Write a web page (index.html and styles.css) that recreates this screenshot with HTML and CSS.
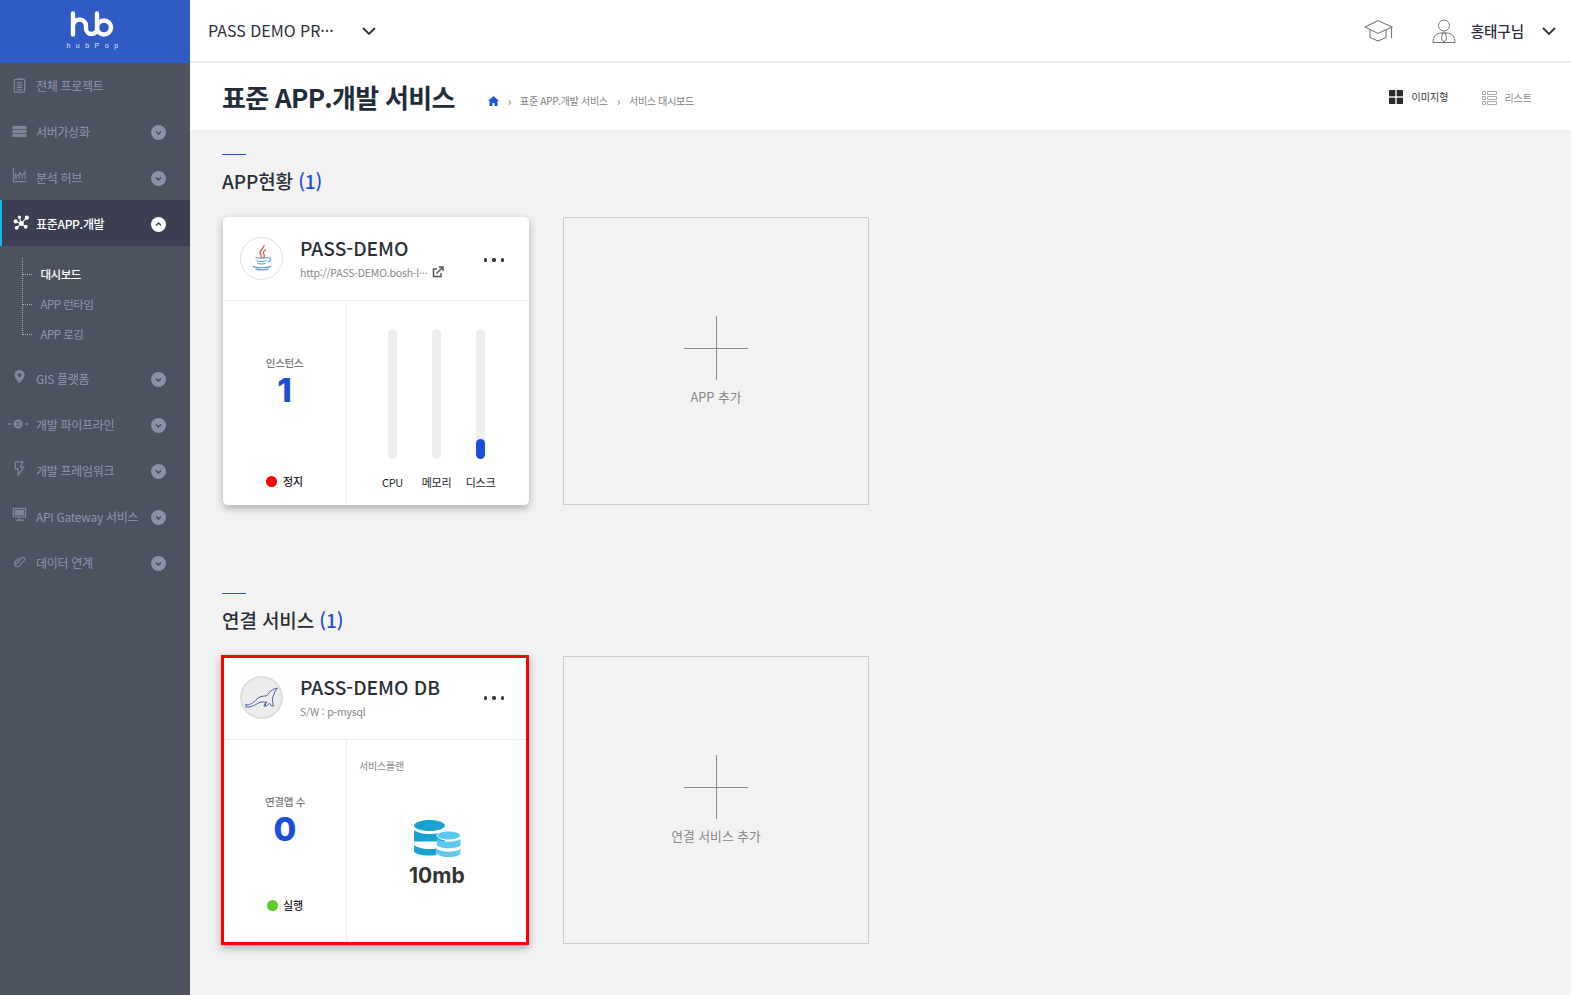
FILE: index.html
```html
<!DOCTYPE html>
<html lang="ko">
<head>
  <meta charset="UTF-8">
  <title>표준 APP.개발 서비스</title>
  <link rel="stylesheet" href="styles.css">
</head>
<body>
  <aside class="sidebar">
    <div class="logo">
      <svg width="44" height="26" viewBox="0 0 44 26" fill="none" stroke="#fff" stroke-width="4.4" stroke-linecap="round"><path d="M3 2.5V23.5M3 15a6.5 6.5 0 0 1 13 0v2.5a5.5 5.5 0 0 0 11 0V2.5"/><circle cx="34" cy="16.5" r="7"/></svg>
      <span class="logo-text">hubPop</span>
    </div>
    <ul class="menu">
      <li class="menu-item first">
        <svg class="menu-icon" viewBox="0 0 16 16" fill="none" stroke="#7f869b" stroke-width="1.3"><rect x="2.5" y="1.5" width="11" height="13.5" rx="1"/><path d="M5 5h6M5 7.5h6M5 10h6M5 12.5h6M6 1h4"/></svg>
        <span>전체 프로젝트</span>
      </li>
      <li class="menu-item">
        <svg class="menu-icon" viewBox="0 0 16 16" fill="#7f869b"><rect x="0.5" y="2" width="15" height="3.4"/><rect x="0.5" y="6.2" width="15" height="3.4"/><rect x="0.5" y="10.4" width="15" height="3.4"/></svg>
        <span>서버가상화</span><i class="toggle"><svg viewBox="0 0 15 15"><path d="M5 6.5l2.5 2.5 2.5-2.5"/></svg></i>
      </li>
      <li class="menu-item">
        <svg class="menu-icon lifted" viewBox="0 0 16 16" fill="none" stroke="#7f869b" stroke-width="1.2"><path d="M1.5 0v14.500h14"/><path d="M3.500 12V6.500l2.500 2 2.500-3.500 2.500 3 3-4V12" /><path d="M5 12V9M8 12V7M11 12V9"/></svg>
        <span>분석 허브</span><i class="toggle"><svg viewBox="0 0 15 15"><path d="M5 6.500l2.500 2.500 2.500-2.500"/></svg></i>
      </li>
      <li class="menu-item active">
        <svg class="menu-icon node" viewBox="0 0 16 16" fill="#fff" stroke="#fff" stroke-width="1"><path d="M2.500 7l5 2 5.500-5.500M7.500 9l-4 4M7.500 9l3.500 2.500M7.500 9L6 3" fill="none"/><circle cx="2.500" cy="7" r="1.500"/><circle cx="8" cy="9" r="1.800"/><circle cx="13" cy="3.500" r="1.500"/><circle cx="3.500" cy="13" r="1.300"/><circle cx="12" cy="12" r="1.300"/><circle cx="6" cy="3" r="1"/></svg>
        <span>표준APP.개발</span><i class="toggle"><svg viewBox="0 0 15 15"><path d="M5 8.500l2.500-2.500 2.500 2.500"/></svg></i>
      </li>
      <li>
        <ul class="submenu">
          <li class="current">대시보드</li>
          <li>APP 런타임</li>
          <li>APP 로깅</li>
        </ul>
      </li>
      <li class="menu-item">
        <svg class="menu-icon lifted" viewBox="0 0 16 16" fill="#7f869b"><path fill-rule="evenodd" d="M8 1a5.500 5.500 0 0 1 5.500 5.500C13.500 10 8 15.500 8 15.500S2.500 10 2.500 6.500A5.500 5.500 0 0 1 8 1zm0 3.500a2 2 0 1 0 0 4 2 2 0 0 0 0-4z"/></svg>
        <span>GIS 플랫폼</span><i class="toggle"><svg viewBox="0 0 15 15"><path d="M5 6.500l2.500 2.500 2.500-2.500"/></svg></i>
      </li>
      <li class="menu-item">
        <svg class="menu-icon wide" viewBox="0 0 22 12" fill="none" stroke="#7f869b"><path d="M0 6h3.500M18 6h3.500" stroke-width="1.500"/><circle cx="10.500" cy="6" r="3.500" fill="#4d5260" stroke-width="2.500"/><circle cx="10.500" cy="6" r="1.500" fill="#7f869b" stroke="none"/></svg>
        <span>개발 파이프라인</span><i class="toggle"><svg viewBox="0 0 15 15"><path d="M5 6.500l2.500 2.500 2.500-2.500"/></svg></i>
      </li>
      <li class="menu-item">
        <svg class="menu-icon lifted" viewBox="0 0 16 16" fill="none" stroke="#7f869b" stroke-width="1.400"><path d="M3.500 1v7.500h3V15l6-8.500H9l1.500-3.500"/><path d="M3.500 1h8l-1 2"/></svg>
        <span>개발 프레임워크</span><i class="toggle"><svg viewBox="0 0 15 15"><path d="M5 6.500l2.500 2.500 2.500-2.500"/></svg></i>
      </li>
      <li class="menu-item">
        <svg class="menu-icon lifted" viewBox="0 0 16 16" fill="none" stroke="#7f869b" stroke-width="1.300"><rect x="1.500" y="1.500" width="13" height="9"/><rect x="3" y="3" width="10" height="6" fill="#7f869b" stroke="none"/><path d="M8 11v2.500M3.500 14h9"/></svg>
        <span>API Gateway 서비스</span><i class="toggle"><svg viewBox="0 0 15 15"><path d="M5 6.500l2.500 2.500 2.500-2.500"/></svg></i>
      </li>
      <li class="menu-item">
        <svg class="menu-icon lifted" viewBox="0 0 16 16" fill="none" stroke="#7f869b" stroke-width="1.200"><path d="M6.500 9.500l4-4.500a2 2 0 0 1 3 2.500l-5.500 6a3 3 0 0 1-4.500-4l4-4.500"/><path d="M9.500 6.500l-4 4.500a1 1 0 0 1-1.500-1.500"/></svg>
        <span>데이터 연계</span><i class="toggle"><svg viewBox="0 0 15 15"><path d="M5 6.500l2.500 2.500 2.500-2.500"/></svg></i>
      </li>
    </ul>
  </aside>

  <div class="content">
    <header class="topbar">
      <div class="project-select">
        <span class="project-name">PASS DEMO PR···</span>
        <svg class="chevron" width="14" height="9" viewBox="0 0 14 9"><path d="M1 1l6 6 6-6"/></svg>
      </div>
      <div class="top-right">
        <svg class="hat" width="30" height="23" viewBox="0 0 30 23" fill="none" stroke="#777" stroke-width="1.100"><path d="M1 8l13-6.500L28 8l-14 6.500z"/><path d="M6 11v7.500l8 3.500 8-3.500V11"/><path d="M27.500 8.500V19"/></svg>
        <svg class="user" width="24" height="24" viewBox="0 0 24 24" fill="none" stroke="#777" stroke-width="1"><circle cx="12" cy="6.500" r="5.500"/><path d="M1 23.500c0-6 3-9 8-9.500h6c5 .5 8 3.500 8 9.500zM10.500 14l-1 6 2.500 3 2.500-3-1-6z"/></svg>
        <span class="user-name">홍태구님</span>
        <svg class="chevron" width="14" height="9" viewBox="0 0 14 9"><path d="M1 1l6 6 6-6"/></svg>
      </div>
    </header>

    <div class="page-head">
      <h1>표준 APP.개발 서비스</h1>
      <nav class="breadcrumb">
        <svg width="11" height="10" viewBox="0 0 11 10" fill="#1a56db"><path d="M5.500 0L11 5H9.500v5H6.500V7h-2v3H1.500V5H0z"/></svg>
        <span class="sep">›</span>
        <span>표준 APP.개발 서비스</span>
        <span class="sep">›</span>
        <span>서비스 대시보드</span>
      </nav>
      <div class="view-switch">
        <span class="view on">
          <svg width="14" height="14" viewBox="0 0 14 14" fill="#2b2b2b"><rect width="6.300" height="6.300"/><rect x="7.700" width="6.300" height="6.300"/><rect y="7.700" width="6.300" height="6.300"/><rect x="7.700" y="7.700" width="6.300" height="6.300"/></svg>
          이미지형
        </span>
        <span class="view off">
          <svg width="15" height="14" viewBox="0 0 15 14" fill="none" stroke="#aaa"><path d="M.5.500h3v3h-3zM.5 5.500h3v3h-3zM.5 10.500h3v3h-3zM5.500.500h9v3h-9zM5.500 5.500h9v3h-9zM5.500 10.500h9v3h-9z"/></svg>
          리스트
        </span>
      </div>
    </div>

    <main class="main">
      <section class="section">
        <h2 class="section-title">APP현황 <em>(1)</em></h2>
        <div class="card-row">
          <article class="card">
            <div class="card-head">
              <div class="avatar">
                <svg width="26" height="28" viewBox="0 0 28 30" fill="none"><path d="M16 1c1 3-4 5-4 8s2 3 1 6M18 6c-3 2-3 3-2 5s1 3-1 4" stroke="#e2574c" stroke-width="1.400"/><path d="M7 14.500c3 1 10 1 13 0M8 18c3 .8 8 .8 11 0M9 21c3 .6 6 .6 9 0M20 15c4-1 5 3 0 4.500" stroke="#5b9bd5" stroke-width="1.100"/><path d="M4 24c5 2 15 2 20 0M7 27c4 1 10 1 14 0" stroke="#5b9bd5" stroke-width="1.300"/></svg>
              </div>
              <div class="card-info">
                <h3>PASS-DEMO</h3>
                <p>http://PASS-DEMO.bosh-l··· <svg class="ext" width="12" height="12" viewBox="0 0 12 12" fill="none" stroke="#555" stroke-width="1.500"><path d="M9 7v3.500H1.500V3H5"/><path d="M4.500 7.500L10.500 1.500M7 1h4v4"/></svg></p>
              </div>
              <span class="more"><b></b><b></b><b></b></span>
            </div>
            <div class="card-body">
              <div class="card-stat">
                <span class="stat-label">인스턴스</span>
                <strong class="stat-num">1</strong>
                <span class="status"><i class="dot red"></i>정지</span>
              </div>
              <div class="usage">
                <div class="usage-col"><div class="track"></div><span>CPU</span></div>
                <div class="usage-col"><div class="track"></div><span>메모리</span></div>
                <div class="usage-col"><div class="track"><div class="fill" style="height: 20px"></div></div><span>디스크</span></div>
              </div>
            </div>
          </article>
          <div class="add-card">
            <span class="plus"></span>
            <span class="add-label">APP 추가</span>
          </div>
        </div>
      </section>

      <section class="section second">
        <h2 class="section-title">연결 서비스 <em>(1)</em></h2>
        <div class="card-row">
          <article class="card selected">
            <div class="card-head">
              <div class="avatar grey">
                <svg width="34" height="23" viewBox="0 0 36 24" fill="none" stroke="#3b5a9a" stroke-width="1"><path d="M1 19c2 2 5 0 8-2s4-5 8-6 6 0 7-2 4-5 7-6l3-1c1 1-1 2-2 3-1 3-3 6-3 10l1 6h-2l-2-3-3 3h-3l2-4c-3 0-5-1-8 1s-9 5-13 4z"/><path d="M21 21l2-5"/></svg>
              </div>
              <div class="card-info">
                <h3>PASS-DEMO DB</h3>
                <p>S/W : p-mysql</p>
              </div>
              <span class="more"><b></b><b></b><b></b></span>
            </div>
            <div class="card-body">
              <div class="card-stat">
                <span class="stat-label">연결앱 수</span>
                <strong class="stat-num">0</strong>
                <span class="status"><i class="dot green"></i>실행</span>
              </div>
              <div class="plan">
                <span class="plan-label">서비스플랜</span>
                <svg class="plan-icon" width="47" height="37" viewBox="0 0 47 37"><path fill="#1ba1d0" d="M0 5.500C0 2.500 7 0 15.500 0S31 2.500 31 5.500 24 11 15.500 11 0 8.500 0 5.500z"/><path fill="#1ba1d0" d="M0 10c3 2.500 9 4 15.500 4S28 12.500 31 10v11.500H0zM0 25c3 2.500 9 4 15.500 4 3 0 5-.2 7-.6V35c-2 .4-4 .5-7 .5C7 35.500 0 33.500 0 31z"/><path fill="#5bc8ee" stroke="#fff" stroke-width="1" d="M23 15.500c0-2.500 5-4.500 11.500-4.500S46.500 13 46.500 15.500 41 20 34.500 20 23 18 23 15.500z"/><path fill="#5bc8ee" d="M23 19c2.500 1.800 6.500 2.800 11.500 2.800S43.500 20.800 46.500 19v6.500c-2.500 1.800-6.500 2.800-12 2.800S25.500 27.300 23 25.500zM23 29c2.500 1.800 6.500 2.800 11.500 2.800S43.500 30.800 46.500 29v3.500c0 2.500-5 4.500-12 4.500S23 35 23 32.500z"/></svg>
                <strong class="plan-size">10mb</strong>
              </div>
            </div>
          </article>
          <div class="add-card">
            <span class="plus"></span>
            <span class="add-label">연결 서비스 추가</span>
          </div>
        </div>
      </section>
    </main>
  </div>
</body>
</html>
```

FILE: styles.css
```css
* {
  box-sizing: border-box;
}

html, body {
  height: 100%;
}

body {
  margin: 0;
  display: flex;
  overflow: hidden;
  background-color: #f2f2f2;
  color: #2b3038;
  font-family: "Noto Sans CJK KR", "Noto Sans", sans-serif;
}

ul {
  list-style: none;
  margin: 0;
  padding: 0;
}

/* sidebar */
.sidebar {
  width: 190px;
  flex-shrink: 0;
  background-color: #4d5260;
}

.logo {
  height: 63px;
  padding: 11px 6px 0 0;
  background-color: #305bc4;
  display: flex;
  flex-direction: column;
  align-items: center;
}

.logo-text {
  margin-top: 4px;
  padding-left: 6px;
  color: #dfe6f8;
  font-family: "Liberation Sans", sans-serif;
  font-size: 7px;
  line-height: 9px;
  letter-spacing: 5.5px;
}

.menu-item {
  height: 46px;
  padding-left: 12px;
  display: flex;
  align-items: center;
  position: relative;
  color: #8c96b3;
  font-size: 12px;
  letter-spacing: -0.3px;
}

.menu-item.first {
  height: 45px;
}

.menu-item.active {
  background-color: #3c3f52;
  border-left: 2px solid #19b5f1;
  padding-left: 10px;
  color: #fff;
  font-weight: 500;
}

.menu-icon {
  width: 15px;
  height: 15px;
  margin-right: 9px;
  flex-shrink: 0;
}

.menu-icon.lifted {
  margin-top: -3px;
}

.menu-icon.node {
  width: 17px;
  height: 17px;
  margin: -1px 6px 0 1px;
}

.menu-icon.wide {
  width: 21px;
  height: 12px;
  margin-left: -4px;
  margin-right: 7px;
}

.toggle {
  position: absolute;
  left: 151px;
  top: 17px;
  width: 15px;
  height: 15px;
  border-radius: 50%;
  background-color: #8b91a6;
}

.active .toggle {
  left: 149px;
  background-color: #fff;
}

.toggle svg {
  display: block;
  fill: none;
  stroke: #454a58;
  stroke-width: 1.4;
}

.active .toggle svg {
  stroke: #3c3f52;
}

.submenu {
  height: 109px;
  padding: 13px 0 6px 40.5px;
  position: relative;
}

.submenu::before {
  content: "";
  position: absolute;
  left: 22px;
  top: 12px;
  height: 77px;
  border-left: 1px dotted #a5abbb;
}

.submenu li {
  height: 30px;
  line-height: 30px;
  position: relative;
  color: #8c96b3;
  font-size: 11.5px;
  letter-spacing: -0.5px;
}

.submenu li::before {
  content: "";
  position: absolute;
  left: -18.5px;
  top: 15px;
  width: 10px;
  border-top: 1px dotted #a5abbb;
}

.submenu .current {
  color: #fff;
  font-weight: 500;
}

/* top */
.content {
  flex: 1;
  min-width: 0;
}

.topbar {
  height: 63px;
  padding: 0 15px 0 18px;
  background-color: #fff;
  border-bottom: 2px solid #eee;
  display: flex;
  align-items: center;
  justify-content: space-between;
}

.project-select, .top-right {
  display: flex;
  align-items: center;
}

.project-name {
  width: 154px;
  font-size: 16px;
  margin-top: -1px;
}

.chevron {
  margin-top: 2px;
  fill: none;
  stroke: #333;
  stroke-width: 1.8;
}

.hat {
  margin-right: 38px;
}

.user {
  margin-right: 15px;
}

.user-name {
  margin-right: 18px;
  font-size: 14.5px;
  font-weight: 500;
  margin-top: -1px;
}

.page-head {
  height: 67px;
  padding: 0 39px 0 32px;
  background-color: #fff;
  display: flex;
  align-items: center;
}

h1 {
  margin: 0 33px 0 0;
  font-size: 26px;
  font-weight: 700;
  letter-spacing: -0.7px;
  color: #222c3a;
}

.breadcrumb {
  display: flex;
  align-items: center;
  gap: 8px;
  margin-top: 8px;
  color: #808080;
  font-size: 10px;
  letter-spacing: -0.3px;
}

.breadcrumb .sep {
  margin: 0 1px;
  font-size: 12px;
  line-height: 12px;
}

.view-switch {
  margin-left: auto;
  display: flex;
  gap: 34px;
}

.view {
  display: flex;
  align-items: center;
  gap: 9px;
  color: #888;
  font-size: 10px;
}

.view.on {
  color: #333;
}

.view.off {
  gap: 7px;
  margin-top: 2px;
}

/* cards */
.main {
  padding: 24px 0 0 32px;
}

.section::before {
  content: "";
  display: block;
  width: 24px;
  height: 1px;
  background-color: #1a56db;
}

.section.second {
  margin-top: 88px;
}

.section-title {
  margin: 11px 0 22px;
  height: 29px;
  font-size: 19px;
  line-height: 29px;
  font-weight: 500;
  letter-spacing: -0.1px;
  color: #2b3038;
}

.section-title em {
  font-style: normal;
  color: #1f4fd8;
}

.card-row {
  display: flex;
  gap: 34px;
  padding-left: 1px;
}

.card {
  width: 306px;
  height: 288px;
  background-color: #fff;
  border-radius: 5px;
  box-shadow: 0 3px 8px rgba(0, 0, 0, 0.3);
  display: flex;
  flex-direction: column;
}

.card.selected {
  margin-left: -2px;
  width: 308px;
  height: 290px;
  margin-top: -1px;
  border: 3px solid #f00;
  border-radius: 0;
}

.card-head {
  height: 84px;
  flex-shrink: 0;
  padding: 0 0 1px 17px;
  border-bottom: 1px solid #eee;
  display: flex;
  align-items: center;
  position: relative;
}

.selected .card-head {
  height: 82px;
  padding: 0 0 2px 16px;
}

.avatar {
  width: 43px;
  height: 43px;
  flex-shrink: 0;
  border-radius: 50%;
  border: 1px solid #ddd;
  display: flex;
  align-items: center;
  justify-content: center;
  margin-right: 17px;
}

.avatar.grey {
  background-color: #ececec;
  border: 2px solid #ddd;
}

.card-info h3 {
  margin: 0;
  font-size: 19.2px;
  line-height: 26px;
  font-weight: 500;
  color: #2b3038;
}

.card-info p {
  margin: 3px 0 0;
  font-size: 10.5px;
  line-height: 18px;
  letter-spacing: -0.2px;
  color: #888;
}

.ext {
  vertical-align: -1px;
  margin-left: 2px;
}

.more {
  position: absolute;
  right: 25px;
  top: 41px;
  display: flex;
  gap: 5px;
}

.selected .more {
  right: 22px;
  top: 38px;
}

.more b {
  width: 3.5px;
  height: 3.5px;
  border-radius: 50%;
  background-color: #333;
}

.card-body {
  flex: 1;
  display: flex;
}

.card-stat {
  width: 124px;
  flex-shrink: 0;
  border-right: 1px solid #eee;
  display: flex;
  flex-direction: column;
  align-items: center;
  padding-top: 54px;
}

.selected .card-stat {
  width: 123px;
}

.stat-label {
  font-size: 10.5px;
  line-height: 16px;
  letter-spacing: -0.3px;
  color: #777;
  font-weight: 500;
}

.stat-num {
  height: 38px;
  font-family: Inter, sans-serif;
  font-size: 33px;
  line-height: 38px;
  font-weight: 800;
  color: #1a4fdb;
}

.status {
  margin-top: 64px;
  display: flex;
  align-items: center;
  gap: 6px;
  font-size: 11px;
  font-weight: 500;
  color: #222;
}

.selected .status {
  margin-top: 49px;
  gap: 5px;
}

.dot {
  width: 11px;
  height: 11px;
  border-radius: 50%;
}

.dot.red {
  background-color: #f00;
}

.dot.green {
  background-color: #5ccf26;
}

.usage {
  flex: 1;
  display: flex;
  padding: 28px 0 0 23px;
}

.usage-col {
  width: 44px;
  display: flex;
  flex-direction: column;
  align-items: center;
  font-size: 11px;
  color: #222;
}

.usage-col span {
  margin: 14px 0 0 1px;
  line-height: 18px;
  letter-spacing: -0.3px;
}

.track {
  width: 9px;
  height: 130px;
  border-radius: 5px;
  background-color: #eee;
  display: flex;
  align-items: flex-end;
}

.fill {
  width: 100%;
  border-radius: 5px;
  background-color: #1a4fdb;
}

.plan {
  flex: 1;
  padding: 18px 0 0 12px;
  display: flex;
  flex-direction: column;
}

.plan-label {
  font-size: 10px;
  line-height: 16px;
  letter-spacing: -0.2px;
  color: #888;
}

.plan-icon {
  margin: 46px 0 0 55px;
}

.plan-size {
  margin: 5px 0 0 50px;
  font-family: Inter, sans-serif;
  font-size: 21px;
  line-height: 28px;
  font-weight: 700;
  color: #333;
}

.add-card {
  width: 306px;
  height: 288px;
  border: 1px solid #ccc;
  display: flex;
  flex-direction: column;
  align-items: center;
  padding-top: 98px;
}

.plus {
  width: 64px;
  height: 64px;
  background:
    linear-gradient(#8a8a8a, #8a8a8a) center / 100% 1px no-repeat,
    linear-gradient(#8a8a8a, #8a8a8a) center / 1px 100% no-repeat;
}

.add-label {
  margin-top: 6px;
  color: #888;
  font-size: 12.8px;
  line-height: 22px;
}
```
